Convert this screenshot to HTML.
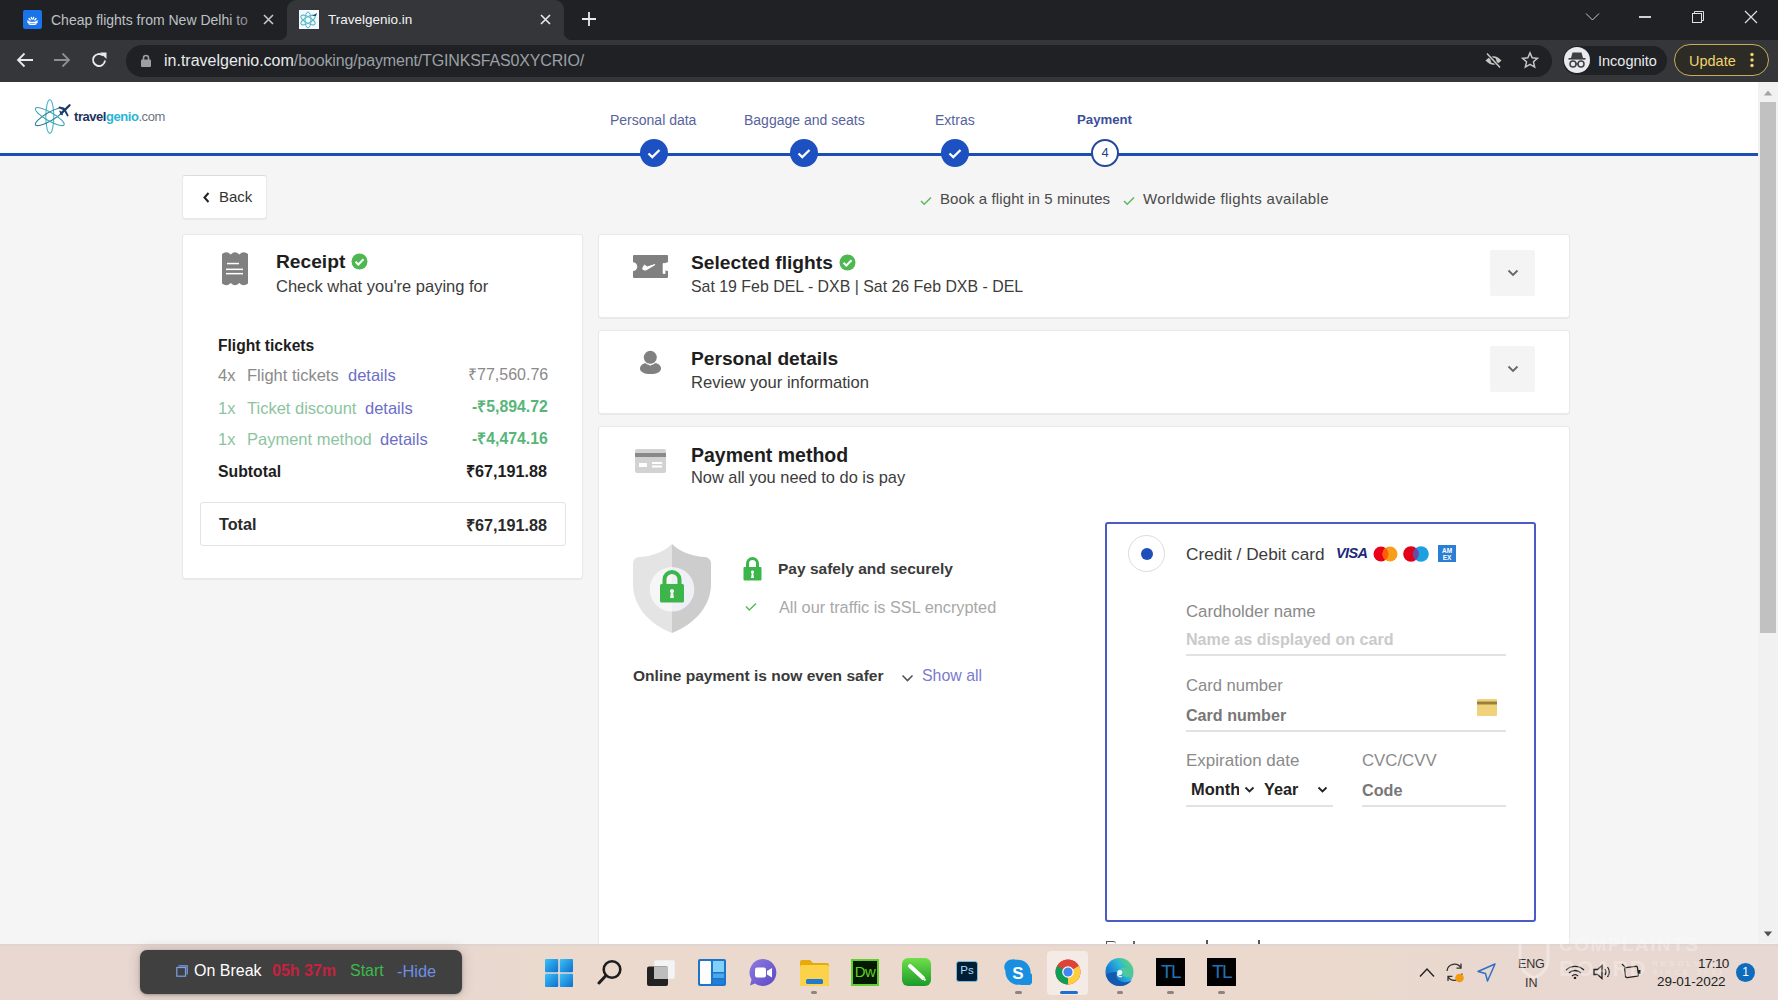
<!DOCTYPE html>
<html><head><meta charset="utf-8">
<style>
*{box-sizing:border-box;margin:0;padding:0}
html,body{width:1778px;height:1000px;overflow:hidden;background:#f5f5f5;font-family:"Liberation Sans",sans-serif}
.a{position:absolute}
#tabs{left:0;top:0;width:1778px;height:40px;background:#202124}
#tab2{left:287px;top:0;width:277px;height:40px;background:#35363a;border-radius:9px 9px 0 0}
#addr{left:0;top:40px;width:1778px;height:42px;background:#35363a}
#omni{left:126px;top:45px;width:1426px;height:32px;background:#202124;border-radius:16px}
.tt{font-size:14px;color:#e8eaed;white-space:nowrap}
#page{left:0;top:82px;width:1758px;height:861px;background:#f5f5f5;overflow:hidden}
#hdr{left:0;top:0;width:1758px;height:71px;background:#fff}
#bline{left:0;top:71px;width:1758px;height:3px;background:#1c4fb5}
#sb{left:1758px;top:82px;width:20px;height:861px;background:#f1f1f1}
#thumb{left:1760px;top:102px;width:16px;height:531px;background:#c1c1c1}
#task{left:0;top:944px;width:1778px;height:56px;background:linear-gradient(90deg,#e9d8d2 0%,#e9d8d0 25%,#ead9cc 32%,#ead9cc 75%,#e9d8d0 85%,#e8d8d3 100%)}
.step{top:139px;width:28px;height:28px;border-radius:50%;background:#1d50c0;display:flex;align-items:center;justify-content:center}
.rrow{left:218px;font-size:16.5px;white-space:nowrap;height:20px;width:300px}
.h2{font-size:19.2px;font-weight:700;color:#1e1e1e;white-space:nowrap}
.sub{font-size:16px;color:#3c3c3c;white-space:nowrap}
.chevbtn{left:1490px;width:45px;height:46px;background:#f4f4f4;border-radius:2px;display:flex;align-items:center;justify-content:center}
.lbl{white-space:nowrap}
.tl{top:958px;width:29px;height:28px;background:#000;color:#2270b5;font-size:19px;line-height:28px;text-align:center;letter-spacing:-1.5px}
.card{background:#fff;border-radius:3px;border:1px solid #e9e9e9;box-shadow:0 1px 1px rgba(0,0,0,.05)}
</style></head><body>
<div id="tabs" class="a"></div>
<div id="tab2" class="a"></div>
<div class="a" style="left:279px;top:32px;width:8px;height:8px;background:radial-gradient(circle at 0 0,#202124 8px,#35363a 8.5px)"></div>
<div class="a" style="left:564px;top:32px;width:8px;height:8px;background:radial-gradient(circle at 100% 0,#202124 8px,#35363a 8.5px)"></div>
<!-- tab1 -->
<div class="a" style="left:23px;top:10px;width:19px;height:19px;background:#1a73e8;border-radius:2px"></div>
<svg class="a" style="left:23px;top:10px" width="19" height="19" viewBox="0 0 19 19"><g stroke="#fff" stroke-width="1.3" fill="none" stroke-linecap="round"><path d="M5 12.5h9"/><path d="M4.5 11l1.5 .5M14.5 11l-1.5 .5M6 8.5l1.2 1.5M13 8.5l-1.2 1.5M8.3 7.3l.6 1.8M10.7 7.3l-.6 1.8"/><path d="M6 13.8q3.5 1.2 7 0"/></g></svg>
<div class="a tt" style="left:51px;top:12px;width:197px;overflow:hidden;color:#bdc1c6;font-size:14px">Cheap flights from New Delhi to</div>
<div class="a" style="left:228px;top:8px;width:22px;height:24px;background:linear-gradient(90deg,rgba(32,33,36,0),rgba(32,33,36,.45))"></div>
<svg class="a" style="left:263px;top:14px" width="11" height="11" viewBox="0 0 11 11"><path d="M1 1L10 10M10 1L1 10" stroke="#c4c7c5" stroke-width="1.6"/></svg>
<!-- tab2 -->
<svg class="a" style="left:299px;top:10px" width="20" height="19" viewBox="0 0 20 19"><rect width="20" height="19" fill="#f4fafb"/><g fill="none" stroke="#55b8c8" stroke-width="1"><ellipse cx="9" cy="10" rx="3" ry="8"/><ellipse cx="9" cy="10" rx="3" ry="8" transform="rotate(60 9 10)"/><ellipse cx="9" cy="10" rx="3" ry="8" transform="rotate(-60 9 10)"/></g><path d="M13 6l5-3-1 3z" fill="#2a4a6a"/></svg>
<div class="a tt" style="left:328px;top:12px;font-size:13.5px;color:#f1f3f4">Travelgenio.in</div>
<svg class="a" style="left:540px;top:14px" width="11" height="11" viewBox="0 0 11 11"><path d="M1 1L10 10M10 1L1 10" stroke="#e8eaed" stroke-width="1.6"/></svg>
<svg class="a" style="left:582px;top:12px" width="14" height="14" viewBox="0 0 14 14"><path d="M7 0V14M0 7H14" stroke="#e8eaed" stroke-width="1.8"/></svg>
<!-- window controls -->
<svg class="a" style="left:1585px;top:12px" width="15" height="10" viewBox="0 0 15 10"><path d="M1 1.5L7.5 8L14 1.5" stroke="#c8c8c8" stroke-width="1" fill="none"/></svg>
<div class="a" style="left:1639px;top:16px;width:12px;height:1.5px;background:#d0d0d0"></div>
<svg class="a" style="left:1691px;top:10px" width="14" height="14" viewBox="0 0 14 14"><g fill="none" stroke="#e0e0e0" stroke-width="1"><rect x="1.5" y="3.5" width="9" height="9"/><path d="M3.5 3.5V1.5H12.5V10.5H10.5"/></g></svg>
<svg class="a" style="left:1744px;top:10px" width="14" height="14" viewBox="0 0 14 14"><path d="M1 1L13 13M13 1L1 13" stroke="#e0e0e0" stroke-width="1.2"/></svg>
<div id="addr" class="a"></div>
<div id="omni" class="a"></div>
<!-- nav icons -->
<svg class="a" style="left:16px;top:51px" width="18" height="18" viewBox="0 0 18 18"><path d="M17 9H2M8.5 2.5L2 9l6.5 6.5" stroke="#e8eaed" stroke-width="1.8" fill="none"/></svg>
<svg class="a" style="left:53px;top:51px" width="18" height="18" viewBox="0 0 18 18"><path d="M1 9H16M9.5 2.5L16 9l-6.5 6.5" stroke="#8d8f92" stroke-width="1.8" fill="none"/></svg>
<svg class="a" style="left:90px;top:51px" width="18" height="18" viewBox="0 0 18 18"><path d="M15 9.5A6 6 0 1 1 13 4.5" stroke="#e8eaed" stroke-width="1.9" fill="none"/><path d="M10 1.5H16.5V8z" fill="#e8eaed"/></svg>
<svg class="a" style="left:141px;top:54px" width="10" height="13" viewBox="0 0 10 13"><path d="M2.5 6V4a2.5 2.5 0 0 1 5 0v2" stroke="#9aa0a6" stroke-width="1.6" fill="none"/><rect x="0" y="5.5" width="10" height="7.5" rx="1" fill="#9aa0a6"/></svg>
<div class="a tt" style="left:164px;top:52px;font-size:16px;color:#e8eaed">in.travelgenio.com<span style="color:#9aa0a6;letter-spacing:-0.15px">/booking/payment/TGINKSFAS0XYCRIO/</span></div>
<svg class="a" style="left:1484px;top:52px" width="19" height="17" viewBox="0 0 19 17"><path d="M1.5 8.5Q9.5 0 17.5 8.5Q9.5 17 1.5 8.5z" fill="#c4c7c5"/><circle cx="9.5" cy="8.5" r="2.8" fill="#202124"/><path d="M3 1.5L16 15.5" stroke="#202124" stroke-width="3.2"/><path d="M3 1.5L16 15.5" stroke="#c4c7c5" stroke-width="1.6"/></svg>
<svg class="a" style="left:1521px;top:51px" width="18" height="18" viewBox="0 0 24 24"><path d="M12 2.5l2.9 6.6 7.1.6-5.4 4.7 1.6 7-6.2-3.7-6.2 3.7 1.6-7L2 9.7l7.1-.6z" fill="none" stroke="#c4c7c5" stroke-width="2"/></svg>
<div class="a" style="left:1563px;top:46px;width:104px;height:29px;background:#202124;border-radius:15px"></div>
<div class="a" style="left:1564px;top:47px;width:26px;height:26px;background:#e8eaed;border-radius:50%"></div>
<svg class="a" style="left:1566px;top:50px" width="22" height="20" viewBox="0 0 22 20"><path d="M5 8h12l-1.5-5.5h-9z" fill="#3c4043"/><rect x="2.5" y="8" width="17" height="1.6" fill="#3c4043"/><g fill="none" stroke="#3c4043" stroke-width="1.5"><circle cx="7" cy="14" r="3"/><circle cx="15" cy="14" r="3"/><path d="M10 14h2"/></g></svg>
<div class="a tt" style="left:1598px;top:52.5px;font-size:14.5px;color:#e8eaed">Incognito</div>
<div class="a" style="left:1674px;top:44px;width:95px;height:32px;border:1.6px solid #c9ad5a;border-radius:16px;background:#2d2b25"></div>
<div class="a tt" style="left:1689px;top:52.5px;font-size:14.5px;color:#f0d36e">Update</div>
<svg class="a" style="left:1749px;top:52px" width="6" height="16" viewBox="0 0 6 16"><g fill="#f0d36e"><circle cx="3" cy="2.5" r="1.7"/><circle cx="3" cy="8" r="1.7"/><circle cx="3" cy="13.5" r="1.7"/></g></svg>

<div class="a" style="left:0;top:82px;width:1758px;height:71px;background:#fff"></div>
<div class="a" style="left:0;top:153px;width:1758px;height:3px;background:#1c4fb3"></div>
<!-- logo -->
<svg class="a" style="left:33px;top:98px" width="40" height="38" viewBox="0 0 40 38"><g fill="none" stroke-width="1.1"><ellipse cx="16.8" cy="18.6" rx="4" ry="16.8" stroke="#45b5c9"/><ellipse cx="16.8" cy="18.6" rx="4.2" ry="16.5" transform="rotate(60 16.8 18.6)" stroke="#2f7f99"/><ellipse cx="16.8" cy="18.6" rx="4.2" ry="16.5" transform="rotate(-60 16.8 18.6)" stroke="#3aa6b8"/></g><g stroke="#1c3a66" stroke-linecap="round"><path d="M28 15.6L36.6 7.2" stroke-width="2.3"/><path d="M26.6 9.4L31.5 11.6 34.6 17.4" stroke-width="1.9" fill="none"/><path d="M27 13.4L29.2 16.6" stroke-width="1.4"/></g></svg>
<div class="a" style="left:74px;top:109px;font-size:13px;font-weight:700;white-space:nowrap;letter-spacing:-0.45px"><span style="color:#1d3461">travel</span><span style="color:#2bb4d6">genio</span><span style="color:#6b7480;font-weight:400">.com</span></div>
<!-- steps -->
<div class="a" style="left:610px;top:112px;font-size:14px;color:#56639c;white-space:nowrap">Personal data</div>
<div class="a" style="left:744px;top:112px;font-size:14px;color:#56639c;white-space:nowrap">Baggage and seats</div>
<div class="a" style="left:935px;top:112px;font-size:14px;color:#56639c;white-space:nowrap">Extras</div>
<div class="a" style="left:1077px;top:112px;font-size:13.2px;font-weight:700;color:#3b4f9c;white-space:nowrap">Payment</div>
<div class="a step" style="left:640px"><svg width="14" height="11" viewBox="0 0 14 11"><path d="M1.5 5.5l3.8 3.6L12.5 2" stroke="#fff" stroke-width="2.3" fill="none"/></svg></div>
<div class="a step" style="left:790px"><svg width="14" height="11" viewBox="0 0 14 11"><path d="M1.5 5.5l3.8 3.6L12.5 2" stroke="#fff" stroke-width="2.3" fill="none"/></svg></div>
<div class="a step" style="left:941px"><svg width="14" height="11" viewBox="0 0 14 11"><path d="M1.5 5.5l3.8 3.6L12.5 2" stroke="#fff" stroke-width="2.3" fill="none"/></svg></div>
<div class="a" style="left:1091px;top:139px;width:28px;height:28px;border-radius:50%;border:2.2px solid #25479e;background:#fff;font-size:13px;color:#2c3f80;text-align:center;line-height:24px">4</div>
<!-- back -->
<div class="a card" style="left:182px;top:175px;width:85px;height:44px;border-top:1px solid #dcdcdc"></div>
<svg class="a" style="left:203px;top:192px" width="7" height="11" viewBox="0 0 7 11"><path d="M5.5 1L1.5 5.5l4 4.5" stroke="#222" stroke-width="2" fill="none"/></svg>
<div class="a" style="left:219px;top:188px;font-size:15px;color:#333;white-space:nowrap">Back</div>
<!-- trust -->
<svg class="a" style="left:920px;top:196px" width="12" height="10" viewBox="0 0 12 10"><path d="M1 5l3.2 3.3L11 1.5" stroke="#5cb85c" stroke-width="1.5" fill="none"/></svg>
<div class="a" style="left:940px;top:190px;font-size:15px;letter-spacing:0.1px;color:#4a4a4a;white-space:nowrap">Book a flight in 5 minutes</div>
<svg class="a" style="left:1123px;top:196px" width="12" height="10" viewBox="0 0 12 10"><path d="M1 5l3.2 3.3L11 1.5" stroke="#5cb85c" stroke-width="1.5" fill="none"/></svg>
<div class="a" style="left:1143px;top:190px;font-size:15px;letter-spacing:0.35px;color:#4a4a4a;white-space:nowrap">Worldwide flights available</div>
<!-- receipt card -->
<div class="a card" style="left:182px;top:234px;width:401px;height:345px"></div>
<svg class="a" style="left:222px;top:252px" width="26" height="34" viewBox="0 0 26 34"><path d="M0 2Q2 0.3 4.3 0.3Q6.5 0.3 8.7 2.6Q11 0.3 13 0.3Q15 0.3 17.3 2.6Q19.5 0.3 21.7 0.3Q24 0.3 26 2V31.5Q24 33.3 21.7 33.3Q19.5 33.3 17.3 31Q15 33.3 13 33.3Q11 33.3 8.7 31Q6.5 33.3 4.3 33.3Q2 33.3 0 31.5z" fill="#808080"/><g fill="#fff"><rect x="5" y="10.8" width="12" height="1.5"/><rect x="4" y="16.6" width="17" height="1.5"/><rect x="4" y="20.9" width="17" height="1.5"/></g></svg>
<div class="a" style="left:276px;top:251px;font-size:19.2px;font-weight:700;color:#1e1e1e;white-space:nowrap">Receipt</div>
<svg class="a" style="left:351px;top:253px" width="17" height="17" viewBox="0 0 17 17"><circle cx="8.5" cy="8.5" r="8" fill="#4cb84f"/><path d="M4.5 8.8l2.8 2.7 5.2-5.3" stroke="#fff" stroke-width="2" fill="none"/></svg>
<div class="a" style="left:276px;top:277px;font-size:16.5px;color:#3c3c3c;white-space:nowrap">Check what you're paying for</div>
<div class="a" style="left:218px;top:337px;font-size:15.6px;font-weight:700;color:#1e1e1e;white-space:nowrap">Flight tickets</div>
<div class="a rrow" style="top:366px;color:#8a8a8a"><span style="position:absolute;left:0">4x</span><span style="position:absolute;left:29px">Flight tickets</span><span style="position:absolute;left:130px;color:#6d6dc8">details</span></div>
<div class="a" style="left:468px;top:363px;font-size:16px;color:#8a8a8a;white-space:nowrap">₹77,560.76</div>
<div class="a rrow" style="top:399px;color:#8cc4a0"><span style="position:absolute;left:0">1x</span><span style="position:absolute;left:29px">Ticket discount</span><span style="position:absolute;left:147px;color:#6d6dc8">details</span></div>
<div class="a" style="left:472px;top:395px;font-size:15.8px;font-weight:700;color:#58b57a;white-space:nowrap">-₹5,894.72</div>
<div class="a rrow" style="top:430px;color:#8cc4a0"><span style="position:absolute;left:0">1x</span><span style="position:absolute;left:29px">Payment method</span><span style="position:absolute;left:162px;color:#6d6dc8">details</span></div>
<div class="a" style="left:472px;top:427px;font-size:15.8px;font-weight:700;color:#58b57a;white-space:nowrap">-₹4,474.16</div>
<div class="a" style="left:218px;top:463px;font-size:15.8px;font-weight:700;color:#1e1e1e;white-space:nowrap">Subtotal</div>
<div class="a" style="left:466px;top:460px;font-size:16.2px;font-weight:700;color:#1e1e1e;white-space:nowrap">₹67,191.88</div>
<div class="a" style="left:200px;top:502px;width:366px;height:44px;border:1px solid #e3e3e3;border-radius:3px"></div>
<div class="a" style="left:219px;top:515px;font-size:16.2px;font-weight:700;color:#2a2a2a;white-space:nowrap">Total</div>
<div class="a" style="left:466px;top:513.5px;font-size:16.2px;font-weight:700;color:#2a2a2a;white-space:nowrap">₹67,191.88</div>
<!-- selected flights -->
<div class="a card" style="left:598px;top:234px;width:972px;height:84px"></div>
<svg class="a" style="left:633px;top:255px" width="35" height="23" viewBox="0 0 35 23"><path d="M1 0H34A1 1 0 0 1 35 1V7.3A4.3 4.3 0 0 0 35 15.9V22A1 1 0 0 1 34 23H1A1 1 0 0 1 0 22V15.9A4.3 4.3 0 0 0 0 7.3V1A1 1 0 0 1 1 0z" fill="#808080"/><path d="M9 13.8L11.2 9.4 14.2 11.6 22.6 8.8 21.5 10.6 13 15.6 10.5 15.2z" fill="#fff"/><rect x="29.7" y="8" width="2.8" height="11" rx="1" fill="#fff"/></svg>
<div class="a h2" style="left:691px;top:252px">Selected flights</div>
<svg class="a" style="left:839px;top:254px" width="17" height="17" viewBox="0 0 17 17"><circle cx="8.5" cy="8.5" r="8" fill="#4cb84f"/><path d="M4.5 8.8l2.8 2.7 5.2-5.3" stroke="#fff" stroke-width="2" fill="none"/></svg>
<div class="a sub" style="left:691px;top:277.5px;font-size:15.9px">Sat 19 Feb DEL - DXB | Sat 26 Feb DXB - DEL</div>
<div class="a chevbtn" style="top:250px"><svg width="12" height="8" viewBox="0 0 12 8"><path d="M1.5 1.5L6 6l4.5-4.5" stroke="#666" stroke-width="1.8" fill="none"/></svg></div>
<!-- personal details -->
<div class="a card" style="left:598px;top:330px;width:972px;height:84px"></div>
<svg class="a" style="left:639px;top:350px" width="23" height="25" viewBox="0 0 23 25"><path d="M1 18.5C1 14.5 5.5 12.5 11.5 12.5S22 14.5 22 18.5C22 22 18 24 11.5 24S1 22 1 18.5z" fill="#808080"/><circle cx="11.3" cy="7.3" r="7.6" fill="#fff"/><circle cx="11.3" cy="7.3" r="6.5" fill="#808080"/><path d="M9 13.5L11.3 15.5 13.6 13.5" stroke="#fff" stroke-width="0.8" fill="none"/></svg>
<div class="a h2" style="left:691px;top:348px">Personal details</div>
<div class="a sub" style="left:691px;top:373px;font-size:16.6px">Review your information</div>
<div class="a chevbtn" style="top:346px"><svg width="12" height="8" viewBox="0 0 12 8"><path d="M1.5 1.5L6 6l4.5-4.5" stroke="#666" stroke-width="1.8" fill="none"/></svg></div>
<!-- payment method -->
<div class="a card" style="left:598px;top:426px;width:972px;height:540px"></div>
<svg class="a" style="left:635px;top:449px" width="31" height="24" viewBox="0 0 31 24"><rect x="0" y="0" width="31" height="24" rx="2" fill="#d2d2d2"/><rect x="0" y="4" width="31" height="4" fill="#8a8a8a"/><rect x="4" y="14" width="8" height="4" fill="#fff"/><rect x="17" y="13" width="10" height="2" fill="#fff"/><rect x="17" y="16.5" width="10" height="2" fill="#fff"/></svg>
<div class="a h2" style="left:691px;top:444px;font-size:19.5px">Payment method</div>
<div class="a sub" style="left:691px;top:468px;font-size:16.4px">Now all you need to do is pay</div>
<!-- security -->
<svg class="a" style="left:633px;top:544px" width="78" height="90" viewBox="0 0 78 90"><path d="M39 0C33 6 22 12 6 13C2 13.5 0 16 0 20V40C0 62 16 80 39 89z" fill="#e4e4e4"/><path d="M39 0C45 6 56 12 72 13C76 13.5 78 16 78 20V40C78 62 62 80 39 89z" fill="#cdcdcd"/><path d="M39 23A22.3 22.3 0 0 0 39 67.6z" fill="#f6f6f6"/><path d="M39 23A22.3 22.3 0 0 1 39 67.6z" fill="#efeff6"/><path d="M31.5 40V35.5A7.5 7.5 0 0 1 46.5 35.5V40" stroke="#3cb54a" stroke-width="4" fill="none"/><rect x="27" y="40" width="24" height="18.5" rx="1.5" fill="#3cb54a"/><path d="M39 45a2.2 2.2 0 0 1 1.2 4L41 54H37L37.8 49A2.2 2.2 0 0 1 39 45z" fill="#f0f0f0"/></svg>
<svg class="a" style="left:743px;top:557px" width="19" height="24" viewBox="0 0 19 24"><path d="M4.5 10V6.5A5 5 0 0 1 14.5 6.5V10" stroke="#3cb54a" stroke-width="3" fill="none"/><rect x="0.5" y="10" width="18" height="13.5" rx="1" fill="#3cb54a"/><path d="M9.5 13.5a1.6 1.6 0 0 1 .8 3L11 21H8L8.7 16.5A1.6 1.6 0 0 1 9.5 13.5z" fill="#fff"/></svg>
<div class="a" style="left:778px;top:560px;font-size:15.5px;font-weight:700;color:#3a3a3a;white-space:nowrap">Pay safely and securely</div>
<svg class="a" style="left:745px;top:602px" width="12" height="10" viewBox="0 0 12 10"><path d="M1 4.5l3.3 3.5L11 1.5" stroke="#5cb85c" stroke-width="1.5" fill="none"/></svg>
<div class="a" style="left:779px;top:598px;font-size:16.3px;color:#a8a8a8;white-space:nowrap">All our traffic is SSL encrypted</div>
<div class="a" style="left:633px;top:667px;font-size:15.55px;font-weight:700;color:#3a3a3a;white-space:nowrap">Online payment is now even safer</div>
<svg class="a" style="left:901px;top:674px" width="13" height="8" viewBox="0 0 13 8"><path d="M1.5 1.5L6.5 6.5l5-5" stroke="#555" stroke-width="1.6" fill="none"/></svg>
<div class="a" style="left:922px;top:667px;font-size:15.9px;color:#7a7ad0;white-space:nowrap">Show all</div>
<!-- card box -->
<div class="a" style="left:1105px;top:522px;width:431px;height:400px;border:2px solid #4b5bc6;border-radius:3px;background:#fff"></div>
<div class="a" style="left:1128px;top:535px;width:37px;height:37px;border:1px solid #dcdcdc;border-radius:50%;background:#fff"></div>
<div class="a" style="left:1141px;top:548px;width:12px;height:12px;border-radius:50%;background:#1e4fb8"></div>
<div class="a lbl" style="left:1186px;top:544px;font-size:17.2px;color:#3c3c3c">Credit / Debit card</div>
<div class="a" style="left:1336px;top:545px;font-size:14.5px;font-weight:700;font-style:italic;color:#1a2a78;letter-spacing:-0.6px;white-space:nowrap">VISA</div>
<svg class="a" style="left:1373px;top:546px" width="25" height="16" viewBox="0 0 25 16"><circle cx="8" cy="8" r="7.5" fill="#eb001b"/><circle cx="17" cy="8" r="7.5" fill="#f79e1b"/><path d="M12.5 2A7.5 7.5 0 0 1 12.5 14A7.5 7.5 0 0 1 12.5 2z" fill="#ff5f00"/></svg>
<svg class="a" style="left:1403px;top:546px" width="26" height="16" viewBox="0 0 26 16"><circle cx="8" cy="8" r="7.8" fill="#e3001b"/><circle cx="18" cy="8" r="7.8" fill="#1e9fe0"/><path d="M13 2A7.8 7.8 0 0 1 13 14A7.8 7.8 0 0 1 13 2z" fill="#6a4aa0"/></svg>
<svg class="a" style="left:1438px;top:545px" width="18" height="17" viewBox="0 0 18 17"><rect width="18" height="17" fill="#2a7fd4"/><text x="9" y="8" font-size="6.5" font-family="Liberation Sans" font-weight="700" fill="#fff" text-anchor="middle">AM</text><text x="9" y="14.5" font-size="6.5" font-family="Liberation Sans" font-weight="700" fill="#fff" text-anchor="middle">EX</text></svg>
<div class="a lbl" style="left:1186px;top:602px;font-size:16.8px;color:#8a8a8a">Cardholder name</div>
<div class="a lbl" style="left:1186px;top:630px;font-size:16.1px;font-weight:700;color:#cacaca">Name as displayed on card</div>
<div class="a" style="left:1186px;top:654px;width:320px;height:1.5px;background:#e2e2e2"></div>
<div class="a lbl" style="left:1186px;top:675.5px;font-size:16.6px;color:#8a8a8a">Card number</div>
<div class="a lbl" style="left:1186px;top:705.5px;font-size:16.1px;font-weight:700;color:#777">Card number</div>
<svg class="a" style="left:1477px;top:699px" width="20" height="17" viewBox="0 0 20 17"><rect width="20" height="17" rx="1" fill="#f0d27a"/><rect y="2.5" width="20" height="3" fill="#9a8040"/></svg>
<div class="a" style="left:1186px;top:730px;width:320px;height:1.5px;background:#e2e2e2"></div>
<div class="a lbl" style="left:1186px;top:751px;font-size:17px;color:#8a8a8a">Expiration date</div>
<div class="a lbl" style="left:1362px;top:751px;font-size:16.8px;color:#8a8a8a">CVC/CVV</div>
<div class="a lbl" style="left:1191px;top:780px;width:48px;overflow:hidden;font-size:16.4px;font-weight:700;color:#222">Month</div>
<svg class="a" style="left:1244px;top:786px" width="11" height="8" viewBox="0 0 11 8"><path d="M1.5 1.5l4 4 4-4" stroke="#222" stroke-width="1.8" fill="none"/></svg>
<div class="a lbl" style="left:1264px;top:780px;font-size:16.2px;font-weight:700;color:#222">Year</div>
<svg class="a" style="left:1317px;top:786px" width="11" height="8" viewBox="0 0 11 8"><path d="M1.5 1.5l4 4 4-4" stroke="#222" stroke-width="1.8" fill="none"/></svg>
<div class="a lbl" style="left:1362px;top:781px;font-size:16.2px;font-weight:700;color:#777">Code</div>
<div class="a" style="left:1186px;top:805px;width:147px;height:1.5px;background:#e2e2e2"></div>
<div class="a" style="left:1362px;top:805px;width:144px;height:1.5px;background:#e2e2e2"></div>
<div class="a" style="left:1106px;top:941px;width:10px;height:3px;border-top:1.5px solid #555;border-left:1.5px solid #555;border-radius:0 4px 0 0"></div><div class="a" style="left:1133px;top:941px;width:1.5px;height:3px;background:#666"></div><div class="a" style="left:1206px;top:940px;width:1.5px;height:4px;background:#555"></div><div class="a" style="left:1258px;top:940px;width:1.5px;height:4px;background:#555"></div>
<div id="sb" class="a"></div>
<div id="thumb" class="a"></div>
<svg class="a" style="left:1763px;top:89px" width="10" height="7" viewBox="0 0 10 7"><path d="M1 6.5L5 1.5 9 6.5z" fill="#a3a3a3"/></svg>
<svg class="a" style="left:1763px;top:931px" width="10" height="7" viewBox="0 0 10 7"><path d="M1 .5L5 5.5 9 .5z" fill="#505050"/></svg>
<div id="task" class="a"></div>
<div class="a" style="left:0;top:944px;width:1778px;height:3px;background:linear-gradient(#ddd3d0,#e9d8d1)"></div>
<!-- on break widget -->
<div class="a" style="left:140px;top:950px;width:322px;height:44px;background:#404040;border-radius:7px;box-shadow:0 0 14px rgba(0,0,0,.18),0 1px 3px rgba(0,0,0,.25)"></div>
<svg class="a" style="left:176px;top:965px" width="12" height="12" viewBox="0 0 12 12"><path d="M2.5 0.8H11.2V9.5" stroke="#7aa0e8" stroke-width="1.2" fill="none"/><rect x="0.8" y="2.5" width="8.7" height="8.7" stroke="#7aa0e8" stroke-width="1.2" fill="none"/></svg>
<div class="a" style="left:194px;top:962px;font-size:16px;color:#fff;white-space:nowrap;letter-spacing:0px">On Break</div>
<div class="a" style="left:272px;top:962px;font-size:16px;font-weight:700;color:#c8213f;white-space:nowrap">05h 37m</div>
<div class="a" style="left:350px;top:962px;font-size:16px;color:#3cba4a;white-space:nowrap">Start</div>
<div class="a" style="left:397px;top:962px;font-size:16.4px;color:#6c8fe6;white-space:nowrap">-Hide</div>
<!-- taskbar icons -->
<svg class="a" style="left:545px;top:959px" width="28" height="28" viewBox="0 0 28 28"><defs><linearGradient id="wg" x1="0" y1="0" x2="1" y2="1"><stop offset="0" stop-color="#3ec1f5"/><stop offset="1" stop-color="#0a6fd0"/></linearGradient></defs><g fill="url(#wg)"><rect x="0" y="0" width="13.2" height="13.2" rx="1"/><rect x="14.8" y="0" width="13.2" height="13.2" rx="1"/><rect x="0" y="14.8" width="13.2" height="13.2" rx="1"/><rect x="14.8" y="14.8" width="13.2" height="13.2" rx="1"/></g></svg>
<svg class="a" style="left:597px;top:959px" width="26" height="27" viewBox="0 0 26 27"><circle cx="15" cy="10.5" r="8.3" stroke="#1e1e1e" stroke-width="2.6" fill="none"/><path d="M9 16.5L2 24" stroke="#1e1e1e" stroke-width="3" stroke-linecap="round"/></svg>
<svg class="a" style="left:647px;top:960px" width="28" height="26" viewBox="0 0 28 26"><rect x="7" y="0" width="21" height="19" rx="2" fill="#f4f4f4"/><rect x="7" y="0" width="21" height="19" rx="2" fill="none" stroke="#e0e0e0" stroke-width=".6"/><rect x="0" y="6.5" width="21" height="19.5" rx="2" fill="#222"/><rect x="7" y="6.5" width="14" height="12.5" fill="#bdbdbd"/></svg>
<svg class="a" style="left:698px;top:959px" width="28" height="27" viewBox="0 0 28 27"><rect x="0" y="0" width="28" height="27" rx="2" fill="#1f73c8"/><rect x="2" y="2" width="11" height="23" rx="1" fill="#fdfdfd"/><rect x="15" y="2" width="11" height="11" fill="#7fd1f7"/><rect x="15" y="14.5" width="11" height="4.5" fill="#4aa9ea"/><rect x="15" y="20.5" width="11" height="4.5" fill="#1e80d8"/></svg>
<svg class="a" style="left:749px;top:959px" width="28" height="27" viewBox="0 0 28 27"><defs><linearGradient id="tg" x1="0" y1="0" x2="1" y2="1"><stop offset="0" stop-color="#8f7ae6"/><stop offset="1" stop-color="#5a4ac0"/></linearGradient></defs><path d="M14 0A13.5 13.5 0 1 1 6 24.5L1 26.5 2.5 20.5A13.5 13.5 0 0 1 14 0z" fill="url(#tg)"/><rect x="6" y="8.5" width="11" height="10" rx="2" fill="#fff"/><path d="M18 12l5-3v9.5l-5-3z" fill="#fff"/></svg>
<svg class="a" style="left:800px;top:960px" width="29" height="26" viewBox="0 0 29 26"><path d="M0 2A2 2 0 0 1 2 0H10L13 3H27A2 2 0 0 1 29 5V24A2 2 0 0 1 27 26H2A2 2 0 0 1 0 24z" fill="#e8a90e"/><rect x="0" y="5" width="29" height="21" rx="2" fill="#fcd24b"/><rect x="6" y="19" width="17" height="5" rx="1.5" fill="#1f7bd2"/></svg>
<div class="a" style="left:811px;top:991px;width:6px;height:3px;border-radius:2px;background:#8c8480"></div>
<div class="a" style="left:851px;top:959px;width:28px;height:27px;background:#061a00;border:2px solid #5fd12e;color:#5fd12e;font-size:15px;line-height:22px;text-align:center;letter-spacing:-0.5px">Dw</div>
<svg class="a" style="left:902px;top:958px" width="29" height="28" viewBox="0 0 29 28"><defs><linearGradient id="gg" x1="0" y1="0" x2="0" y2="1"><stop offset="0" stop-color="#6fe04a"/><stop offset="1" stop-color="#1b9a2a"/></linearGradient></defs><rect width="29" height="28" rx="6" fill="url(#gg)"/><path d="M8 8L21 20" stroke="#fff" stroke-width="4" stroke-linecap="round"/><path d="M21 20l2.5 2.5" stroke="#d8f5d0" stroke-width="2"/></svg>
<div class="a" style="left:956px;top:961px;width:22px;height:21px;background:#001e36;border:1.5px solid #7ab8d8;border-radius:3px;color:#b0dcf2;font-size:11.5px;font-weight:400;line-height:17px;text-align:center">Ps</div>
<svg class="a" style="left:1004px;top:959px" width="28" height="26" viewBox="0 0 28 26"><path d="M8 0.5A7.5 7.5 0 0 0 1.5 12A12.5 12.5 0 0 0 16 25.5A7.5 7.5 0 0 0 26.5 14A12.5 12.5 0 0 0 12 0.8A7.5 7.5 0 0 0 8 0.5z" fill="#1a8fe0"/><text x="14" y="19.5" text-anchor="middle" font-family="Liberation Sans" font-weight="700" font-size="17" fill="#fff">S</text></svg>
<div class="a" style="left:1015px;top:991px;width:7px;height:3px;border-radius:2px;background:#8c8480"></div>
<div class="a" style="left:1047px;top:951px;width:41px;height:44px;background:#f4ebe6;border-radius:4px"></div>
<svg class="a" style="left:1055px;top:959px" width="26" height="26" viewBox="0 0 26 26"><circle cx="13" cy="13" r="12.5" fill="#db4437"/><path d="M13 13L2.2 6.75A12.5 12.5 0 0 0 13 25.5z" fill="#0f9d58"/><path d="M13 13L13 25.5A12.5 12.5 0 0 0 23.8 6.75z" fill="#ffcd40"/><path d="M13 13L2.2 6.75A12.5 12.5 0 0 1 23.8 6.75z" fill="#db4437"/><circle cx="13" cy="13" r="5.8" fill="#fff"/><circle cx="13" cy="13" r="4.6" fill="#4285f4"/></svg>
<div class="a" style="left:1060px;top:991px;width:18px;height:3px;border-radius:2px;background:#1f6fd0"></div>
<svg class="a" style="left:1105px;top:958px" width="29" height="28" viewBox="0 0 29 28"><defs><linearGradient id="eg" x1="0.9" y1="0.2" x2="0.1" y2="0.8"><stop offset="0" stop-color="#5ad27a"/><stop offset=".35" stop-color="#2cb8d8"/><stop offset=".7" stop-color="#1a86d6"/><stop offset="1" stop-color="#1466c4"/></linearGradient></defs><circle cx="14.5" cy="14" r="14" fill="url(#eg)"/><path d="M1 17C3 25 10 28 15 28C20 28 24 26 27 22C23 25 17 25 13.5 22C10.5 19.5 11 16 12 14C7 14 3 15 1 17z" fill="#1558b0"/><path d="M27.5 19C28.5 15 26 11 22 10C17 9 13 11.5 12 14C13 12.5 15 12 16.5 12.5C19 13.5 18.5 17 17 18C21 19 25 20 27.5 19z" fill="#4cc89a"/><circle cx="14.8" cy="14.5" r="2.6" fill="#e9f6fb"/><path d="M12.5 16C13 18 15 19 17 18.5" stroke="#e9f6fb" stroke-width="1.2" fill="none"/></svg>
<div class="a" style="left:1117px;top:991px;width:6px;height:3px;border-radius:2px;background:#8c8480"></div>
<div class="a tl" style="left:1156px">TL</div>
<div class="a" style="left:1167px;top:991px;width:7px;height:3px;border-radius:2px;background:#8c8480"></div>
<div class="a tl" style="left:1207px">TL</div>
<div class="a" style="left:1218px;top:991px;width:7px;height:3px;border-radius:2px;background:#8c8480"></div>
<!-- tray -->
<svg class="a" style="left:1419px;top:967px" width="16" height="11" viewBox="0 0 16 11"><path d="M1 9.5L8 2l7 7.5" stroke="#222" stroke-width="1.4" fill="none"/></svg>
<svg class="a" style="left:1444px;top:962px" width="22" height="21" viewBox="0 0 22 21"><path d="M3 9A7.5 7.5 0 0 1 17 6M17 1.5V6.2H12.5" stroke="#333" stroke-width="1.3" fill="none"/><path d="M18 11.5A7.5 7.5 0 0 1 4 14.5M4 19V14.3H8.5" stroke="#333" stroke-width="1.3" fill="none"/><circle cx="15.5" cy="16" r="4.3" fill="#f29a12"/></svg>
<svg class="a" style="left:1477px;top:963px" width="19" height="19" viewBox="0 0 19 19"><path d="M18 1L1 8.5l7.5 2 2 7.5z" stroke="#2f6fc8" stroke-width="1.5" fill="none" stroke-linejoin="round"/></svg>
<div class="a" style="left:1518px;top:957px;font-size:12.5px;color:#333;white-space:nowrap;letter-spacing:-0.2px">ENG</div>
<div class="a" style="left:1525px;top:976px;font-size:12.5px;color:#333;white-space:nowrap">IN</div>
<svg class="a" style="left:1565px;top:965px" width="20" height="14" viewBox="0 0 20 14"><g stroke="#222" stroke-width="1.3" fill="none"><path d="M1 5A13 13 0 0 1 19 5"/><path d="M4 8A8.5 8.5 0 0 1 16 8"/><path d="M7 11A4 4 0 0 1 13 11"/></g><circle cx="10" cy="13" r="1.3" fill="#222"/></svg>
<svg class="a" style="left:1593px;top:964px" width="20" height="16" viewBox="0 0 20 16"><path d="M1 5.5H4.5L9 1.5V14.5L4.5 10.5H1z" stroke="#222" stroke-width="1.3" fill="none"/><path d="M12 5Q14 8 12 11M14.5 3Q18 8 14.5 13" stroke="#222" stroke-width="1.3" fill="none"/></svg>
<svg class="a" style="left:1621px;top:963px" width="20" height="16" viewBox="0 0 20 16"><rect x="4" y="4" width="13" height="10" rx="1.5" stroke="#222" stroke-width="1.3" fill="none" transform="rotate(-8 10 9)"/><rect x="17" y="7" width="2.5" height="4" fill="#222"/><path d="M1 1l3 3" stroke="#222" stroke-width="1.3"/></svg>
<div class="a" style="left:1698px;top:955.5px;font-size:13.5px;color:#222;white-space:nowrap;letter-spacing:-0.6px">17:10</div>
<div class="a" style="left:1657px;top:973.5px;font-size:13.5px;color:#222;white-space:nowrap;letter-spacing:-0.05px">29-01-2022</div>
<div class="a" style="left:1736px;top:963px;width:19px;height:19px;border-radius:50%;background:#0f6cbd;color:#fff;font-size:12px;text-align:center;line-height:19px">1</div>
<!-- watermark -->
<div class="a" style="left:1559px;top:934px;font-size:19px;font-weight:700;color:rgba(255,255,255,.28);white-space:nowrap;letter-spacing:1.5px">COMPLAINTS</div>
<div class="a" style="left:1559px;top:956px;font-size:22px;font-weight:700;color:rgba(255,255,255,.28);white-space:nowrap;letter-spacing:1.5px">BOARD</div>
<div class="a" style="left:1652px;top:959px;font-size:8px;color:rgba(255,255,255,.35);white-space:nowrap;letter-spacing:3px">RESOLVED<br>SINCE 2011</div>
<svg class="a" style="left:1517px;top:937px" width="34" height="42" viewBox="0 0 34 42"><path d="M3 2H31V22C31 32 24 38 17 41C10 38 3 32 3 22z" stroke="rgba(255,255,255,.35)" stroke-width="3" fill="none"/></svg>

</body></html>
